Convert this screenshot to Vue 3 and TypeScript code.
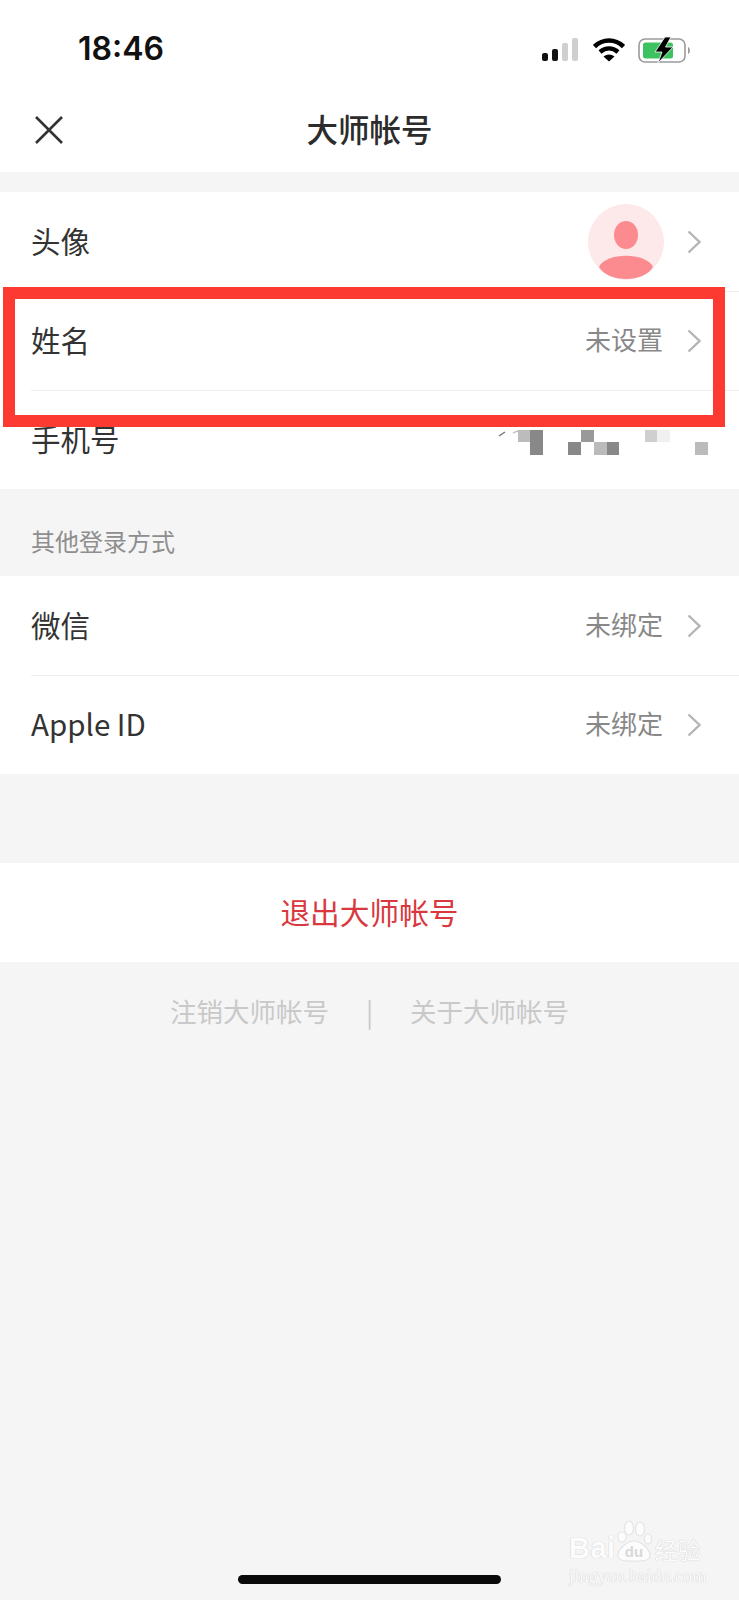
<template>
  <div class="page">
    <div class="status-bar">
      <span class="time">18:46</span>
      <div class="status-icons">
        <svg width="36" height="24" viewBox="0 0 36 24">
          <rect x="0" y="15" width="6" height="8" rx="2" fill="#111" />
          <rect x="10" y="11" width="6" height="12" rx="2" fill="#111" />
          <rect x="20" y="5" width="6" height="18" rx="2" fill="#cfcfcf" />
          <rect x="30" y="0" width="6" height="23" rx="2" fill="#cfcfcf" />
        </svg>
        <svg width="32" height="24" viewBox="0 0 32 24">
          <path d="M1.500 8.500C10 0.500 22 0.500 30.500 8.500" fill="none" stroke="#000" stroke-width="4.500" />
          <path d="M7 14C12.500 9.400 19.500 9.400 25 14" fill="none" stroke="#000" stroke-width="4.500" />
          <path d="M10.500 18.500C14 15.800 18 15.800 21.500 18.500L16 23.500Z" fill="#000" />
        </svg>
        <svg class="battery" width="53" height="26" viewBox="0 0 53 26">
          <rect x="1" y="2" width="46" height="23" rx="6" fill="#fff" stroke="#9a9a9a" stroke-width="1.600" />
          <rect x="5" y="5.500" width="30" height="16" rx="2.500" fill="#3cc35f" />
          <path d="M50 10C52.500 10.500 52.500 16.500 50 17Z" fill="#999" />
          <path d="M27 0L17 15H24L20 26L35 10H27.500L33 0Z" fill="#000" stroke="#fff" stroke-width="0.800" />
        </svg>
      </div>
    </div>

    <header class="nav">
      <svg class="close" width="30" height="30" viewBox="0 0 30 30">
        <path d="M2 2L28 28M28 2L2 28" stroke="#333" stroke-width="2.600" fill="none" />
      </svg>
      <h1 class="title">大师帐号</h1>
    </header>

    <section class="group first">
      <div class="row">
        <span class="label">头像</span>
        <div class="right avatar-right">
          <svg width="76" height="76" viewBox="0 0 76 76">
            <circle cx="38" cy="38" r="38" fill="#fde8ea" />
            <ellipse cx="38" cy="31" rx="12" ry="14" fill="#fc8b8f" />
            <path d="M11 63C18 48 58 48 65 63C56 79 20 79 11 63Z" fill="#fc8b8f" />
          </svg>
          <svg width="14" height="24" viewBox="0 0 14 24">
            <path d="M1.500 1.500L12.500 12L1.500 22.500" fill="none" stroke="#b5b5b5" stroke-width="2.400" />
          </svg>
        </div>
      </div>
      <div class="row">
        <span class="label">姓名</span>
        <div class="right">
          <span class="value">未设置</span>
          <svg width="14" height="24" viewBox="0 0 14 24">
            <path d="M1.500 1.500L12.500 12L1.500 22.500" fill="none" stroke="#b5b5b5" stroke-width="2.400" />
          </svg>
        </div>
      </div>
      <div class="row">
        <span class="label">手机号</span>
        <div class="phone">
          <svg class="phone-stub" width="28" height="8" viewBox="0 0 28 8">
            <path d="M1 6L7 2" stroke="#777" stroke-width="1.500" fill="none" />
            <path d="M15 3Q20 0 26 2" stroke="#bbb" stroke-width="1.200" fill="none" />
          </svg>
          <div class="mosaic">
            <i
              v-for="(c, i) in mosaicCells"
              :key="i"
              :style="{ gridColumn: c.col, gridRow: c.row, background: c.color }"
            ></i>
          </div>
        </div>
      </div>
    </section>

    <div class="section-label">其他登录方式</div>

    <section class="group">
      <div v-for="item in bindings" :key="item" class="row">
        <span class="label">{{ item }}</span>
        <div class="right">
          <span class="value">未绑定</span>
          <svg width="14" height="24" viewBox="0 0 14 24">
            <path d="M1.500 1.500L12.500 12L1.500 22.500" fill="none" stroke="#b5b5b5" stroke-width="2.400" />
          </svg>
        </div>
      </div>
    </section>

    <div class="logout">退出大师帐号</div>

    <div class="links">
      <span>注销大师帐号</span>
      <span class="sep">|</span>
      <span>关于大师帐号</span>
    </div>

    <div class="home-bar"></div>

    <div class="highlight"></div>

    <div class="watermark">
      <div class="wm-top">
        <span class="wm-bai">Bai</span>
        <svg class="wm-paw" width="36" height="42" viewBox="0 0 36 42">
          <g fill="#fcfcfc" stroke="#e4e4e4" stroke-width="1.200">
            <ellipse cx="6" cy="17" rx="4" ry="5" />
            <ellipse cx="13" cy="8" rx="4.500" ry="7" />
            <ellipse cx="24" cy="9" rx="4.500" ry="7" />
            <ellipse cx="32" cy="19" rx="3.500" ry="5" />
            <path d="M18 21C11 21 1 30 2 36C3 42 12 41 18 41C24 41 33 42 34 36C35 30 25 21 18 21Z" />
          </g>
          <text x="18" y="37" text-anchor="middle" class="wm-du">du</text>
        </svg>
        <span class="wm-jy">经验</span>
      </div>
      <div class="wm-url">jingyan.baidu.com</div>
    </div>
  </div>
</template>

<script setup lang="ts">
const bindings = ['微信', 'Apple ID']

const mosaicCells = [
  { col: 1, row: 1, color: '#bcbcbc' },
  { col: 2, row: '1 / 3', color: '#888' },
  { col: 5, row: 2, color: '#888' },
  { col: 6, row: 1, color: '#999' },
  { col: 7, row: 2, color: '#bbb' },
  { col: 8, row: 2, color: '#888' },
  { col: 11, row: 1, color: '#cfcfcf' },
  { col: 12, row: 1, color: '#f0f0f0' },
  { col: 15, row: 2, color: '#bbb' }
]
</script>

<style>
body {
  margin: 0;
  background: #f5f5f5;
}
</style>

<style scoped>
.page {
  position: relative;
  display: flex;
  flex-direction: column;
  height: 1600px;
  overflow: hidden;
  background: #f5f5f5;
  color: #333;
  font-family: "Noto Sans CJK SC", "Liberation Sans", sans-serif;
}

.status-bar {
  display: flex;
  justify-content: space-between;
  align-items: center;
  height: 100px;
  padding: 0 48px 0 78px;
  background: #fff;
}

.time {
  padding-bottom: 2px;
  font-family: Inter, "Liberation Sans", sans-serif;
  font-size: 32px;
  font-weight: 600;
  line-height: 1;
  color: #111;
}

.status-icons {
  display: flex;
  align-items: center;
  gap: 15px;
}

.battery {
  margin-left: -2px;
}

.nav {
  position: relative;
  display: flex;
  align-items: center;
  justify-content: center;
  height: 72px;
  background: #fff;
}

.close {
  position: absolute;
  left: 34px;
  top: 15px;
}

.title {
  margin: 0 0 15px;
  font-size: 31.500px;
  font-weight: 500;
  line-height: 1;
  color: #2c2c2c;
}

.group {
  background: #fff;
}

.group.first {
  margin-top: 20px;
}

.row {
  display: flex;
  align-items: center;
  justify-content: space-between;
  height: 99px;
  margin-left: 31px;
  padding-right: 38px;
  box-shadow: 0 1px 0 #efefef;
}

.row:last-child {
  box-shadow: none;
}

.label {
  padding-bottom: 4px;
  font-size: 29.500px;
  color: #333;
}

.right {
  display: flex;
  align-items: center;
  gap: 24px;
}

.avatar-right {
  gap: 23px;
}

.value {
  padding-bottom: 4px;
  font-size: 26px;
  color: #888;
}

.phone {
  display: flex;
  align-items: flex-start;
  margin: 5px -7px 0 0;
}

.phone-stub {
  margin-right: -8px;
}

.mosaic {
  display: grid;
  grid-template-columns: repeat(15, 12.700px);
  grid-template-rows: repeat(2, 12.500px);
}

.section-label {
  padding: 35px 0 19px 31px;
  font-size: 24px;
  line-height: 33px;
  color: #8e8e8e;
}

.logout {
  margin-top: 89px;
  height: 97px;
  padding-bottom: 2px;
  line-height: 97px;
  text-align: center;
  font-size: 29.700px;
  color: #d9383e;
  background: #fff;
}

.links {
  display: flex;
  justify-content: center;
  gap: 37px;
  margin-top: 30px;
  font-size: 26.500px;
  line-height: 38px;
  color: #c9c9c9;
}

.home-bar {
  width: 263px;
  height: 9px;
  margin: auto auto 16px;
  border-radius: 5px;
  background: #0a0a0a;
}

.highlight {
  position: absolute;
  left: 3px;
  top: 287px;
  width: 698px;
  height: 116px;
  border: 12px solid #fc3a31;
}

.watermark {
  position: absolute;
  left: 569px;
  top: 1520px;
  width: 132px;
  color: #fcfcfc;
  text-shadow: 0 0 1px #cfcfcf, 0 0 1px #cfcfcf;
}

.wm-top {
  display: flex;
  align-items: flex-end;
  height: 42px;
}

.wm-bai {
  font-family: "Liberation Sans", sans-serif;
  font-size: 29px;
  font-weight: 700;
  line-height: 28px;
  letter-spacing: 0.500px;
}

.wm-paw {
  flex-shrink: 0;
}

.wm-du {
  font-family: "Liberation Sans", sans-serif;
  font-size: 15px;
  font-weight: 700;
  fill: #d8d8d8;
  text-shadow: none;
}

.wm-jy {
  margin-left: 3px;
  font-size: 23px;
  line-height: 26px;
  white-space: nowrap;
}

.wm-url {
  font-family: "Liberation Serif", serif;
  font-size: 18.500px;
  line-height: 20px;
  margin-top: 4px;
  white-space: nowrap;
}
</style>
